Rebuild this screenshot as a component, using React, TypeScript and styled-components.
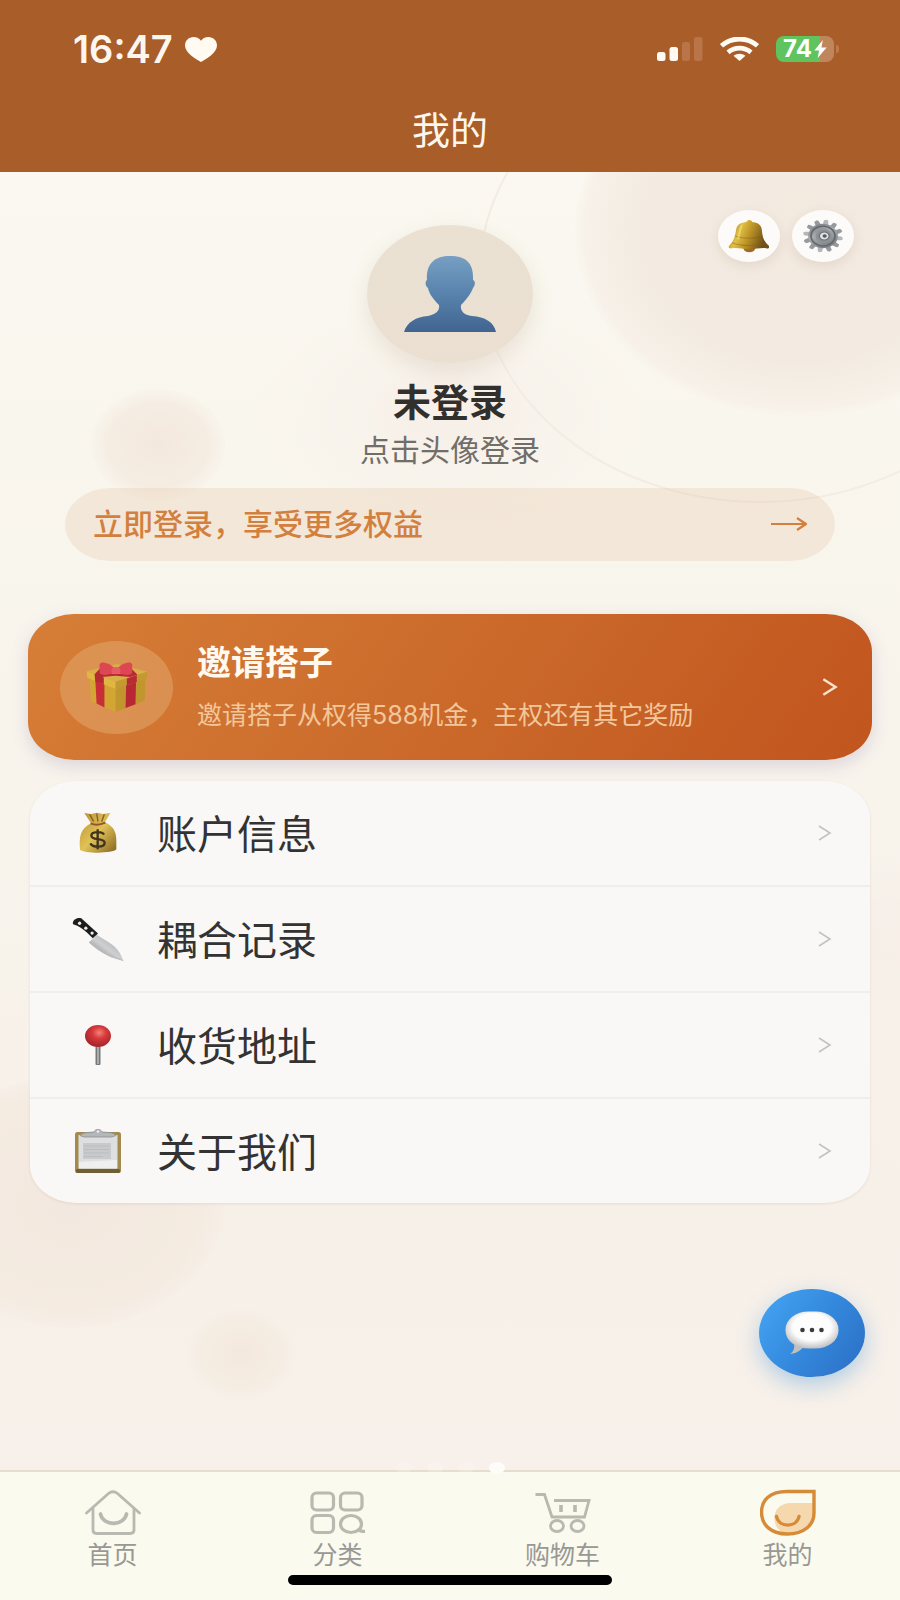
import React from 'react';
import styled, { createGlobalStyle } from 'styled-components';

const GlobalStyle = createGlobalStyle`
  * { box-sizing: border-box; }
  body {
    margin: 0;
    background: #f9f7f0;
    font-family: Inter, "Noto Sans CJK SC", sans-serif;
    color: #333;
  }
  button { font: inherit; border: 0; padding: 0; background: none; cursor: pointer; }
  svg { display: block; flex: none; }
`;

const Page = styled.div`
  display: flex;
  flex-direction: column;
  min-height: 100vh;
`;

const Header = styled.header`
  background: #a95d29;
  color: #fcf7ee;
  padding-bottom: 4px;
`;

const StatusBar = styled.div`
  display: flex;
  align-items: center;
  justify-content: space-between;
  height: 92px;
  padding: 6px 66px 0 73px;
`;

const StatusGroup = styled.div<{ $gap: number }>`
  display: flex;
  align-items: center;
  gap: ${(p) => p.$gap}px;
`;

const Clock = styled.time`
  font-size: 38px;
  line-height: 40px;
  font-weight: 600;
`;

const Battery = styled.div`
  position: relative;
  display: flex;
  align-items: center;
  justify-content: center;
  gap: 2px;
  width: 58px;
  height: 26px;
  border-radius: 8px;
  background: linear-gradient(90deg, #5fc45f 76%, #bf855b 76%);
  color: #fff;
  font-size: 24px;
  line-height: 26px;
  font-weight: 700;

  &::after {
    content: "";
    position: absolute;
    left: 60px;
    top: 9px;
    width: 3px;
    height: 8px;
    border-radius: 0 3px 3px 0;
    background: #bd7a4c;
  }
`;

const Title = styled.h1`
  margin: 0;
  height: 76px;
  font-size: 38px;
  line-height: 76px;
  font-weight: 400;
  text-align: center;
`;

const Main = styled.main`
  position: relative;
  flex: 1;
  padding: 0 28px 40px;
  overflow: hidden;
  background: linear-gradient(180deg, #faf8f0 0%, #f8f4ec 45%, #f7f0e9 80%, #f8f0ea 100%);
`;

const Backdrop = styled.svg`
  position: absolute;
  inset: 0;
  width: 100%;
  height: 1298px;
`;

const Profile = styled.section`
  position: relative;
  display: flex;
  flex-direction: column;
  align-items: center;
  padding: 53px 37px 0;
`;

const Tools = styled.div`
  position: absolute;
  top: 38px;
  right: 18px;
  display: flex;
  gap: 12px;
`;

const ToolButton = styled.button`
  display: grid;
  place-items: center;
  width: 62px;
  height: 52px;
  border-radius: 50%;
  background: #fcfbf9;
  box-shadow: 0 4px 12px rgba(120, 90, 60, 0.12);
`;

const Avatar = styled.button`
  display: grid;
  place-items: center;
  width: 166px;
  height: 138px;
  border-radius: 50%;
  background: linear-gradient(180deg, #eae1d3, #ebdfd1);
  box-shadow: 0 8px 22px rgba(140, 105, 70, 0.14);
`;

const Name = styled.h2`
  margin: 15px 0 0;
  font-size: 38px;
  line-height: 48px;
  font-weight: 700;
  color: #32302d;
`;

const Hint = styled.p`
  margin: 4px 0 18px;
  font-size: 30px;
  line-height: 40px;
  color: #716e69;
`;

const LoginBar = styled.button`
  display: flex;
  align-items: center;
  justify-content: space-between;
  width: 100%;
  height: 73px;
  padding: 0 28px 2px;
  border-radius: 46px / 37px;
  background: rgba(222, 180, 140, 0.22);
  color: #d3803e;
  font-size: 30px;
  line-height: 40px;
  font-weight: 500;
`;

const Invite = styled.button`
  position: relative;
  display: flex;
  align-items: center;
  width: 100%;
  min-height: 146px;
  margin-top: 53px;
  padding: 0 34px 0 32px;
  border-radius: 46px / 38px;
  background: linear-gradient(125deg, #d67e37 0%, #cb6a2b 50%, #c1551e 100%);
  box-shadow: 0 6px 18px rgba(110, 90, 150, 0.2);
  color: #fff9ef;
  text-align: left;
`;

const GiftBadge = styled.span`
  display: grid;
  place-items: center;
  width: 113px;
  height: 93px;
  border-radius: 50%;
  background: rgba(230, 180, 125, 0.42);
`;

const InviteText = styled.span`
  display: flex;
  flex: 1;
  flex-direction: column;
  gap: 4px;
  margin-left: 24px;
  padding-top: 4px;
`;

const InviteTitle = styled.strong`
  font-size: 34px;
  line-height: 48px;
  font-weight: 700;
`;

const InviteDetail = styled.span`
  font-size: 25px;
  line-height: 48px;
  color: #f3c79c;
`;

const Menu = styled.ul`
  position: relative;
  margin: 21px 2px 0;
  padding: 0;
  list-style: none;
  border-radius: 46px / 38px;
  background: #f9f8f6;
  box-shadow: 0 1px 3px rgba(120, 90, 60, 0.12);
`;

const MenuItem = styled.li`
  & + & { border-top: 2px solid #f0eeeb; }
`;

const MenuLink = styled.a`
  display: flex;
  align-items: center;
  height: 104px;
  padding: 0 38px 0 39px;
  color: #333;
  font-size: 40px;
  line-height: 56px;
  text-decoration: none;
`;

const MenuIcon = styled.span`
  display: grid;
  place-items: center;
  width: 58px;
  margin-right: 30px;
`;

const MenuLabel = styled.span`
  flex: 1;
  padding-top: 4px;
`;

const ChatButton = styled.button`
  position: absolute;
  right: 35px;
  bottom: 93px;
  display: grid;
  place-items: center;
  width: 106px;
  height: 88px;
  border-radius: 50%;
  background: linear-gradient(125deg, #42a0ef 10%, #3489dd 50%, #2c70c6 95%);
  box-shadow: 0 8px 22px rgba(50, 140, 220, 0.36);
`;

const TabBar = styled.nav`
  position: relative;
  border-top: 2px solid #e8dccc;
  background: #fafaef;
  padding: 16px 0 15px;
`;

const PageDots = styled.span`
  position: absolute;
  top: -10px;
  left: 0;
  right: 0;
  display: flex;
  justify-content: center;
  gap: 15px;
`;

const Dot = styled.span<{ $active?: boolean }>`
  width: 16px;
  height: 12px;
  border-radius: 50%;
  background: ${(p) => (p.$active ? '#fdfcfa' : 'rgba(255, 255, 255, 0.2)')};
`;

const Tabs = styled.div`
  display: grid;
  grid-template-columns: repeat(4, 1fr);
`;

const Tab = styled.a`
  display: flex;
  flex-direction: column;
  align-items: center;
  gap: 5px;
  color: #999894;
  font-size: 25px;
  line-height: 28px;
  text-decoration: none;
`;

const HomeIndicator = styled.div`
  width: 36%;
  height: 10px;
  margin: 6px auto 0;
  border-radius: 5px;
  background: #000;
`;

const Chevron = ({ size, color, stroke }: { size: number; color: string; stroke: number }) => (
  <svg width={size} height={size + 4} viewBox="0 0 14 18" fill="none" stroke={color} strokeWidth={stroke} aria-hidden="true">
    <path d="M1 2 L12 9 L1 16" />
  </svg>
);

const HeartIcon = () => (
  <svg width="32" height="25" viewBox="0 0 32 25" fill="#fffaf2" aria-hidden="true">
    <path d="M16 25 C11 22 0 16 0 8.500 C0 3.500 4 0 8.500 0 C12 0 14.500 1.500 16 3.800 C17.500 1.500 20 0 23.500 0 C28 0 32 3.500 32 8.500 C32 16 21 22 16 25Z" />
  </svg>
);

const SignalIcon = () => (
  <svg width="46" height="24" viewBox="0 0 46 24" fill="#fffaf2" aria-hidden="true">
    <rect x="0" y="15" width="8.500" height="9" rx="2.500" />
    <rect x="12.500" y="10" width="8.500" height="14" rx="2.500" />
    <rect x="25" y="5" width="8" height="19" rx="2.500" fill="#b9744a" />
    <rect x="37" y="0" width="8.500" height="24" rx="2.500" fill="#b9744a" />
  </svg>
);

const WifiIcon = () => (
  <svg width="39" height="24" viewBox="0 0 39 24" fill="none" stroke="#fffaf2" strokeWidth="4.800" aria-hidden="true">
    <path d="M1.500 8.800 C11.500 -0.300 27.500 -0.300 37.500 8.800" />
    <path d="M8 15.300 C14.500 9.800 24.500 9.800 31 15.300" />
    <path d="M13.500 18.800 C17 16 22 16 25.500 18.800 L19.500 24Z" fill="#fffaf2" stroke="none" />
  </svg>
);

const BoltIcon = () => (
  <svg width="13" height="18" viewBox="0 0 13 19" fill="#fff" aria-hidden="true">
    <path d="M9 0 L0 11 H5 L3.500 19 L13 8 H7.500Z" />
  </svg>
);

const BellIcon = () => (
  <svg width="42" height="34" viewBox="83 64 124 100" aria-hidden="true">
    <defs>
      <linearGradient id="bell" x1="0" x2="1" y1="0" y2="0.300">
        <stop offset="0" stopColor="#8d6a14" />
        <stop offset="0.350" stopColor="#e2bf45" />
        <stop offset="0.600" stopColor="#bd9527" />
        <stop offset="1" stopColor="#705017" />
      </linearGradient>
    </defs>
    <ellipse cx="146" cy="152" rx="17" ry="10" fill="#a8662c" />
    <path d="M138 73 C138 65 154 65 154 73 C171 74 181 82 183 96 C185 118 188 128 203 142 C206 147 204 151 198 151 C182 147 164 154 146 153 C128 154 110 147 92 151 C85 151 83 147 87 142 C102 128 104 112 107 95 C110 81 121 74 138 73Z" fill="url(#bell)" />
    <path d="M104 114 C124 122 162 123 186 114 M95 134 C122 145 168 145 195 135" fill="none" stroke="#806015" strokeWidth="3" opacity="0.450" />
    <path d="M124 82 C116 94 119 108 112 124" fill="none" stroke="#f5df81" strokeWidth="6" opacity="0.600" />
  </svg>
);

const GearIcon = () => (
  <svg width="42" height="34" viewBox="-62 -50 124 100" aria-hidden="true">
    <defs>
      <linearGradient id="gear" x1="0" x2="0.500" y1="0" y2="1">
        <stop offset="0" stopColor="#707479" />
        <stop offset="0.500" stopColor="#a9acaf" />
        <stop offset="1" stopColor="#7d8084" />
      </linearGradient>
    </defs>
    <g transform="scale(1.220 1)">
      {Array.from({ length: 12 }, (_, i) => (
        <path key={i} d="M-6 -33 L-6 -46 L2 -49 L5 -45 L7 -33Z" fill={i % 3 ? '#96999d' : '#b4b7b9'} transform={`rotate(${i * 30 + 10})`} />
      ))}
      <circle r="36" fill="url(#gear)" />
      <circle r="29" fill="none" stroke="#62676c" strokeWidth="4" />
      <circle cx="2" r="20" fill="#8e9296" />
      <circle cx="3" r="12" fill="#dfe0e1" stroke="#6b6f74" strokeWidth="3" />
      <circle cx="4" r="5" fill="#555a60" />
    </g>
  </svg>
);

const PersonIcon = () => (
  <svg width="92" height="76" viewBox="0 0 92 76" aria-hidden="true">
    <defs>
      <linearGradient id="person" x1="0" x2="0" y1="0" y2="1">
        <stop offset="0" stopColor="#779fc3" />
        <stop offset="0.550" stopColor="#5580aa" />
        <stop offset="1" stopColor="#416490" />
      </linearGradient>
    </defs>
    <path d="M0 76 C3 66 12 61 24 60 C32 58 36 55 35 49 C28 42 25 37 24 32 C21 30 21 25 23 24 C22 7 31 0 46 0 C62 0 70 7 69 24 C72 25 71 30 69 32 C67 37 64 42 57 49 C56 55 60 59 68 60 C81 61 90 66 92 76Z" fill="url(#person)" />
  </svg>
);

const ArrowIcon = () => (
  <svg width="36" height="18" viewBox="0 0 36 18" fill="none" stroke="#d3803e" strokeWidth="2.200" aria-hidden="true">
    <path d="M0 9 H35 M26 3 L35 9 L26 15" />
  </svg>
);

const GiftIcon = () => (
  <svg width="62" height="52" viewBox="106 122 188 156" aria-hidden="true">
    <path d="M116 170 L196 192 V276 L122 244Z" fill="#d3a634" />
    <path d="M196 192 L286 168 L284 242 L196 276Z" fill="#c1962f" />
    <path d="M134 172 L162 180 V262 L138 250Z" fill="#c72e38" />
    <path d="M228 182 L258 174 L256 252 L226 264Z" fill="#b92735" />
    <path d="M108 152 L200 130 L292 154 L196 184Z" fill="#d9b047" />
    <path d="M108 152 L196 184 V206 L110 172Z" fill="#e0b740" />
    <path d="M196 184 L292 154 L290 174 L196 206Z" fill="#c49931" />
    <path d="M132 161 L160 171 V192 L134 183Z M230 174 L260 164 V185 L230 195Z M148 144 L166 160 L230 160 L246 146 L262 163 L240 170 L196 166 L154 170 L132 161Z" fill="#b82a33" />
    <path d="M192 143 C178 126 150 120 147 132 V157 C151 167 178 164 192 155Z M202 143 C216 126 243 120 246 132 V157 C242 167 216 164 202 155Z" fill="#dd4653" />
    <ellipse cx="197" cy="150" rx="14" ry="11" fill="#e85966" />
  </svg>
);

const MoneyIcon = () => (
  <svg width="38" height="42" viewBox="88 100 114 124" aria-hidden="true">
    <defs>
      <linearGradient id="money" x1="0" x2="1" y1="0" y2="1">
        <stop offset="0" stopColor="#b78e31" />
        <stop offset="0.500" stopColor="#e0c257" />
        <stop offset="1" stopColor="#876321" />
      </linearGradient>
    </defs>
    <path d="M104 102 L124 105 L142 101 L160 105 L182 102 L166 130 C190 142 200 156 200 186 V211 C191 224 103 224 91 212 C88 173 91 151 124 133Z" fill="url(#money)" />
    <path d="M120 106 L132 128 M141 104 L145 128 M164 106 L156 128" stroke="#80602c" strokeWidth="4" />
    <path d="M123 133 C136 139 151 138 167 131" fill="none" stroke="#96532d" strokeWidth="6" />
    <path d="M163 167 C157 156 125 157 125 170 C125 185 165 176 165 191 C165 206 130 207 122 193 M144 151 V211" fill="none" stroke="#40341c" strokeWidth="7" />
  </svg>
);

const KnifeIcon = () => (
  <svg width="52" height="44" viewBox="64 412 156 134" aria-hidden="true">
    <defs>
      <linearGradient id="blade" x1="0" x2="1" y1="1" y2="0">
        <stop offset="0.200" stopColor="#8f9294" />
        <stop offset="0.500" stopColor="#cfd0d1" />
        <stop offset="0.900" stopColor="#a2a6a8" />
      </linearGradient>
    </defs>
    <path d="M138 466 L178 491 C199 504 213 524 219 545 C184 538 157 528 114 490Z" fill="url(#blade)" />
    <path d="M116 489 C153 520 184 532 219 545" fill="none" stroke="#b9bbbd" strokeWidth="3" />
    <path d="M66 434 C62 423 78 411 91 416 L142 462 L126 477 C108 457 84 438 66 434Z" fill="#1d1d1e" />
    <g fill="#ededed"><circle cx="86" cy="431" r="5" /><circle cx="105" cy="446" r="5" /><circle cx="124" cy="461" r="5" /></g>
  </svg>
);

const PinIcon = () => (
  <svg width="26" height="40" viewBox="0 0 26 40" aria-hidden="true">
    <defs>
      <radialGradient id="pin" cx="0.550" cy="0.350" r="0.600">
        <stop offset="0" stopColor="#f58276" />
        <stop offset="0.450" stopColor="#d6393b" />
        <stop offset="1" stopColor="#a9272c" />
      </radialGradient>
    </defs>
    <rect x="10.500" y="19" width="5" height="21" rx="1" fill="#77787a" />
    <path d="M13 21 V39" stroke="#babbbc" strokeWidth="1.500" />
    <ellipse cx="13" cy="11" rx="13" ry="11" fill="url(#pin)" />
  </svg>
);

const ClipboardIcon = () => (
  <svg width="46" height="44" viewBox="0 0 46 44" aria-hidden="true">
    <rect x="0" y="3" width="46" height="41" rx="2.500" fill="#a38a4e" />
    <rect x="1" y="40" width="44" height="4" rx="1.500" fill="#6f5f37" />
    <rect x="3.500" y="6" width="39" height="33.500" fill="#dedfe0" />
    <path d="M4 39.500 V33 L42 31 V39.500Z" fill="#efefef" />
    <rect x="8" y="14" width="28" height="16" fill="#c9cacc" />
    <path d="M9 17 H34 M9 20.500 H34 M9 24 H34 M9 27.500 H28" stroke="#bbbdbf" strokeWidth="1" />
    <path d="M5 6.500 C7 3.500 13 3.500 19 3 C20 -0.500 26 -0.500 27 3 C34 3.500 39 3.500 41 6.500 L37 8 H9Z" fill="#b4b7ba" stroke="#8c8f92" strokeWidth="0.800" />
    <circle cx="23" cy="2.500" r="1.300" fill="#eee" />
  </svg>
);

const ChatIcon = () => (
  <svg width="54" height="44" viewBox="0 0 54 44" aria-hidden="true">
    <defs>
      <radialGradient id="bubble" cx="0.500" cy="0.420" r="0.600">
        <stop offset="0.600" stopColor="#fdfdfd" />
        <stop offset="1" stopColor="#bdbcbc" />
      </radialGradient>
    </defs>
    <path d="M9 32 C10 38 8 41 5 43 C13 42 16 39 20 34Z" fill="#bfc0c2" />
    <rect x="0.500" y="0.500" width="53" height="37" rx="23" ry="18" fill="url(#bubble)" />
    <g fill="#3c3c3e"><circle cx="17.500" cy="19" r="2.300" /><circle cx="27" cy="19" r="2.300" /><circle cx="36.500" cy="19" r="2.300" /></g>
  </svg>
);

const HomeTabIcon = () => (
  <svg width="56" height="48" viewBox="0 0 56 48" fill="none" stroke="#b9b8b1" strokeWidth="2.800" strokeLinecap="round" strokeLinejoin="round" aria-hidden="true">
    <path d="M1.500 25 L23.500 5.500 Q28 2 32.500 5.500 L54.500 25" />
    <path d="M8 20.500 V42 Q8 45.500 11.500 45.500 H45 Q49 45.500 49 42 V20.500" />
    <path d="M15.500 26 C18 38.500 39 38.500 41.500 26" strokeWidth="3.800" />
  </svg>
);

const CategoryTabIcon = () => (
  <svg width="56" height="48" viewBox="0 0 56 48" fill="none" stroke="#b9b8b1" strokeWidth="3.200" aria-hidden="true">
    <rect x="2" y="5" width="21.500" height="17" rx="4.500" />
    <rect x="30.500" y="5" width="21.500" height="17" rx="4.500" />
    <rect x="2" y="27.500" width="21.500" height="17" rx="4.500" />
    <ellipse cx="41" cy="36" rx="10.500" ry="8.500" />
    <path d="M47.500 41 Q50 43.500 55 43.500" />
  </svg>
);

const CartTabIcon = () => (
  <svg width="56" height="48" viewBox="0 0 56 48" fill="none" stroke="#b9b8b1" strokeWidth="2.800" aria-hidden="true">
    <path d="M0.500 6.500 H9.500 L17 29 H49.500 L54 12.500 H19" />
    <path d="M26 17 V24 M40 17 V24" strokeWidth="3.600" />
    <ellipse cx="22" cy="38" rx="6.500" ry="5.500" />
    <ellipse cx="42.500" cy="38" rx="6.500" ry="5.500" />
  </svg>
);

const MineTabIcon = () => (
  <svg width="56" height="48" viewBox="0 0 56 48" fill="none" stroke="#d68b36" strokeWidth="3.400" strokeLinecap="round" aria-hidden="true">
    <path d="M53 15 H31 C20 15 14 22 14.500 31 C15 40 21 46 30 46 C45 46 54 37 53 24Z" fill="#f6d8ae" stroke="none" />
    <path d="M54 3.500 H27 C10 3.500 1.500 12 1.500 24 C1.500 37 11 46 27.500 46 C44 46 54 37 54 25Z" />
    <path d="M16.500 28.500 C19 40 36.500 40 39 28.500" />
  </svg>
);

const menuItems = [
  { label: '账户信息', icon: <MoneyIcon /> },
  { label: '耦合记录', icon: <KnifeIcon /> },
  { label: '收货地址', icon: <PinIcon /> },
  { label: '关于我们', icon: <ClipboardIcon /> },
];

const tabs = [
  { label: '首页', icon: <HomeTabIcon /> },
  { label: '分类', icon: <CategoryTabIcon /> },
  { label: '购物车', icon: <CartTabIcon /> },
  { label: '我的', icon: <MineTabIcon /> },
];

export default function App() {
  return (
    <Page>
      <GlobalStyle />
      <Header>
        <StatusBar>
          <StatusGroup $gap={12}>
            <Clock>16:47</Clock>
            <HeartIcon />
          </StatusGroup>
          <StatusGroup $gap={17}>
            <SignalIcon />
            <WifiIcon />
            <Battery>
              74
              <BoltIcon />
            </Battery>
          </StatusGroup>
        </StatusBar>
        <Title>我的</Title>
      </Header>

      <Main>
        <Backdrop viewBox="0 0 900 1298" preserveAspectRatio="none" aria-hidden="true">
          <defs>
            <radialGradient id="sun">
              <stop offset="0" stopColor="#f2e9df" />
              <stop offset="0.700" stopColor="#f3ebe2" />
              <stop offset="0.960" stopColor="#f7f1e9" />
              <stop offset="1" stopColor="#f9f5ed" stopOpacity="0.500" />
            </radialGradient>
            <radialGradient id="haze">
              <stop offset="0.200" stopColor="#f5ebe5" stopOpacity="0.550" />
              <stop offset="1" stopColor="#f7efe8" stopOpacity="0" />
            </radialGradient>
            <radialGradient id="blob">
              <stop offset="0" stopColor="#f4e8dd" />
              <stop offset="0.750" stopColor="#f5ede3" />
              <stop offset="1" stopColor="#f6efe6" stopOpacity="0.300" />
            </radialGradient>
            <radialGradient id="dune">
              <stop offset="0" stopColor="#f3e8df" />
              <stop offset="0.850" stopColor="#f4ebe1" />
              <stop offset="1" stopColor="#f6eee6" stopOpacity="0.600" />
            </radialGradient>
          </defs>
          <ellipse cx="800" cy="61" rx="225" ry="184" fill="url(#sun)" />
          <ellipse cx="450" cy="240" rx="190" ry="120" fill="url(#haze)" />
          <ellipse cx="760" cy="100" rx="280" ry="230" fill="none" stroke="#f3ece3" strokeWidth="2" />
          <ellipse cx="158" cy="273" rx="67" ry="56" fill="url(#blob)" />
          <ellipse cx="70" cy="1030" rx="155" ry="126" fill="url(#dune)" />
          <ellipse cx="890" cy="770" rx="130" ry="100" fill="url(#haze)" />
          <ellipse cx="241" cy="1182" rx="54" ry="46" fill="url(#blob)" />
        </Backdrop>

        <Profile>
          <Tools>
            <ToolButton aria-label="消息"><BellIcon /></ToolButton>
            <ToolButton aria-label="设置"><GearIcon /></ToolButton>
          </Tools>
          <Avatar aria-label="登录"><PersonIcon /></Avatar>
          <Name>未登录</Name>
          <Hint>点击头像登录</Hint>
          <LoginBar>
            立即登录，享受更多权益
            <ArrowIcon />
          </LoginBar>
        </Profile>

        <Invite>
          <GiftBadge><GiftIcon /></GiftBadge>
          <InviteText>
            <InviteTitle>邀请搭子</InviteTitle>
            <InviteDetail>邀请搭子从权得588机金，主权还有其它奖励</InviteDetail>
          </InviteText>
          <Chevron size={16} color="#fbe3cd" stroke={2.2} />
        </Invite>

        <Menu>
          {menuItems.map((item) => (
            <MenuItem key={item.label}>
              <MenuLink href="#">
                <MenuIcon>{item.icon}</MenuIcon>
                <MenuLabel>{item.label}</MenuLabel>
                <Chevron size={14} color="#c3c2c0" stroke={1.6} />
              </MenuLink>
            </MenuItem>
          ))}
        </Menu>

        <ChatButton aria-label="在线客服"><ChatIcon /></ChatButton>
      </Main>

      <TabBar>
        <PageDots>
          <Dot />
          <Dot />
          <Dot />
          <Dot $active />
        </PageDots>
        <Tabs>
          {tabs.map((tab) => (
            <Tab key={tab.label} href="#">
              {tab.icon}
              {tab.label}
            </Tab>
          ))}
        </Tabs>
        <HomeIndicator />
      </TabBar>
    </Page>
  );
}
